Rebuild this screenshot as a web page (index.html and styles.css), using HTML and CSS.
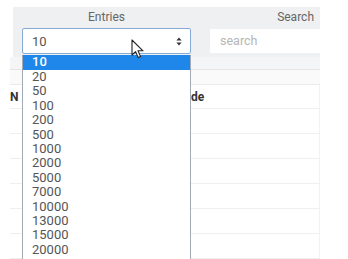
FILE: index.html
```html
<!DOCTYPE html>
<html>
<head>
<meta charset="utf-8">
<link rel="stylesheet" href="styles.css">
</head>
<body>
<div class="page">
  <div class="toolbar">
    <div class="field entries">
      <div class="label">Entries</div>
      <div class="select">
        <span class="value">10</span>
        <svg class="updown" width="6" height="9" viewBox="0 0 6 9"><path d="M3 0.5 L5.6 3.6 H0.4 Z M3 8.5 L5.6 5.4 H0.4 Z" fill="#333"/></svg>
        <ul class="menu">
          <li class="active">10</li>
          <li>20</li>
          <li>50</li>
          <li>100</li>
          <li>200</li>
          <li>500</li>
          <li>1000</li>
          <li>2000</li>
          <li>5000</li>
          <li>7000</li>
          <li>10000</li>
          <li>13000</li>
          <li>15000</li>
          <li>20000</li>
        </ul>
        <svg class="cursor" width="14" height="20" viewBox="0 0 14 20"><path d="M1 1 V16 L4.6 12.6 L7.2 18.6 L9.6 17.6 L7 11.8 H12 Z" fill="#fff" stroke="#222" stroke-width="1.1" stroke-linejoin="round"/></svg>
      </div>
    </div>
    <div class="field search">
      <div class="label">Search</div>
      <div class="input">search</div>
    </div>
  </div>
  <div class="table">
    <div class="band"></div>
    <div class="subhead"></div>
    <div class="row head"><span class="c1">N</span><span class="c2">de</span></div>
    <div class="row"></div>
    <div class="row"></div>
    <div class="row"></div>
    <div class="row"></div>
    <div class="row"></div>
    <div class="row"></div>
  </div>
</div>
</body>
</html>
```
FILE: styles.css
```css
* { box-sizing: border-box; }
html, body { margin: 0; padding: 0; background: #fff; }
body { font-family: Roboto, "Noto Sans", sans-serif; width: 348px; height: 259px; overflow: hidden; }
.page { width: 320px; padding-left: 10px; padding-top: 7px; }
.toolbar {
  margin-left: 3px;
  background: #eef0f2;
  display: grid;
  grid-template-columns: 169px 110px;
  column-gap: 19px;
  padding: 0 0 3px 9px;
  height: 50px;
}
.label { height: 21px; line-height: 21px; font-size: 12px; color: #666; }
.entries .label { text-align: center; }
.search .label { text-align: right; padding-right: 6px; }
.select {
  position: relative;
  height: 26px;
  background: #fff;
  border: 1px solid #86aad6;
  border-radius: 2px;
  display: flex;
  align-items: center;
  padding-left: 9px;
  font-size: 13px;
  color: #555;
}
.select .value { flex: 1; }
.updown { margin-right: 8px; }
.input {
  margin-top: 1px;
  height: 24px;
  background: #fff;
  font-size: 12.5px;
  color: #b5b5b5;
  line-height: 24px;
  padding-left: 10px;
}
.menu {
  position: absolute;
  left: -1px;
  top: 26px;
  width: 169px;
  margin: 0;
  padding: 0 0 10px;
  list-style: none;
  background: #fff;
  border: 1px solid #a3aab5;
  border-top: none;
  z-index: 5;
}
.menu li { height: 14.4px; line-height: 14.4px; font-size: 13px; color: #555; padding-left: 9px; }
.menu li.active { background: #1f86ea; color: #fff; font-weight: 500; height: 15px; }
.cursor { position: absolute; left: 108px; top: 10px; z-index: 6; }
.table { width: 310px; }
.band { height: 13px; background: #f4f5f6; border-bottom: 1px solid #e6e6e6; }
.subhead { height: 15px; background: #fafafa; border-bottom: 1px solid #ebebeb; }
.row { height: 25px; border-bottom: 1px solid #efefef; border-right: 1px solid #f2f2f2; position: relative; }
.row.head { height: 24px; font-size: 12px; font-weight: 700; color: #333; display: flex; align-items: center; }
.row.head .c1 { width: 181px; }
.row.head .c2 { flex: 1; }
```
